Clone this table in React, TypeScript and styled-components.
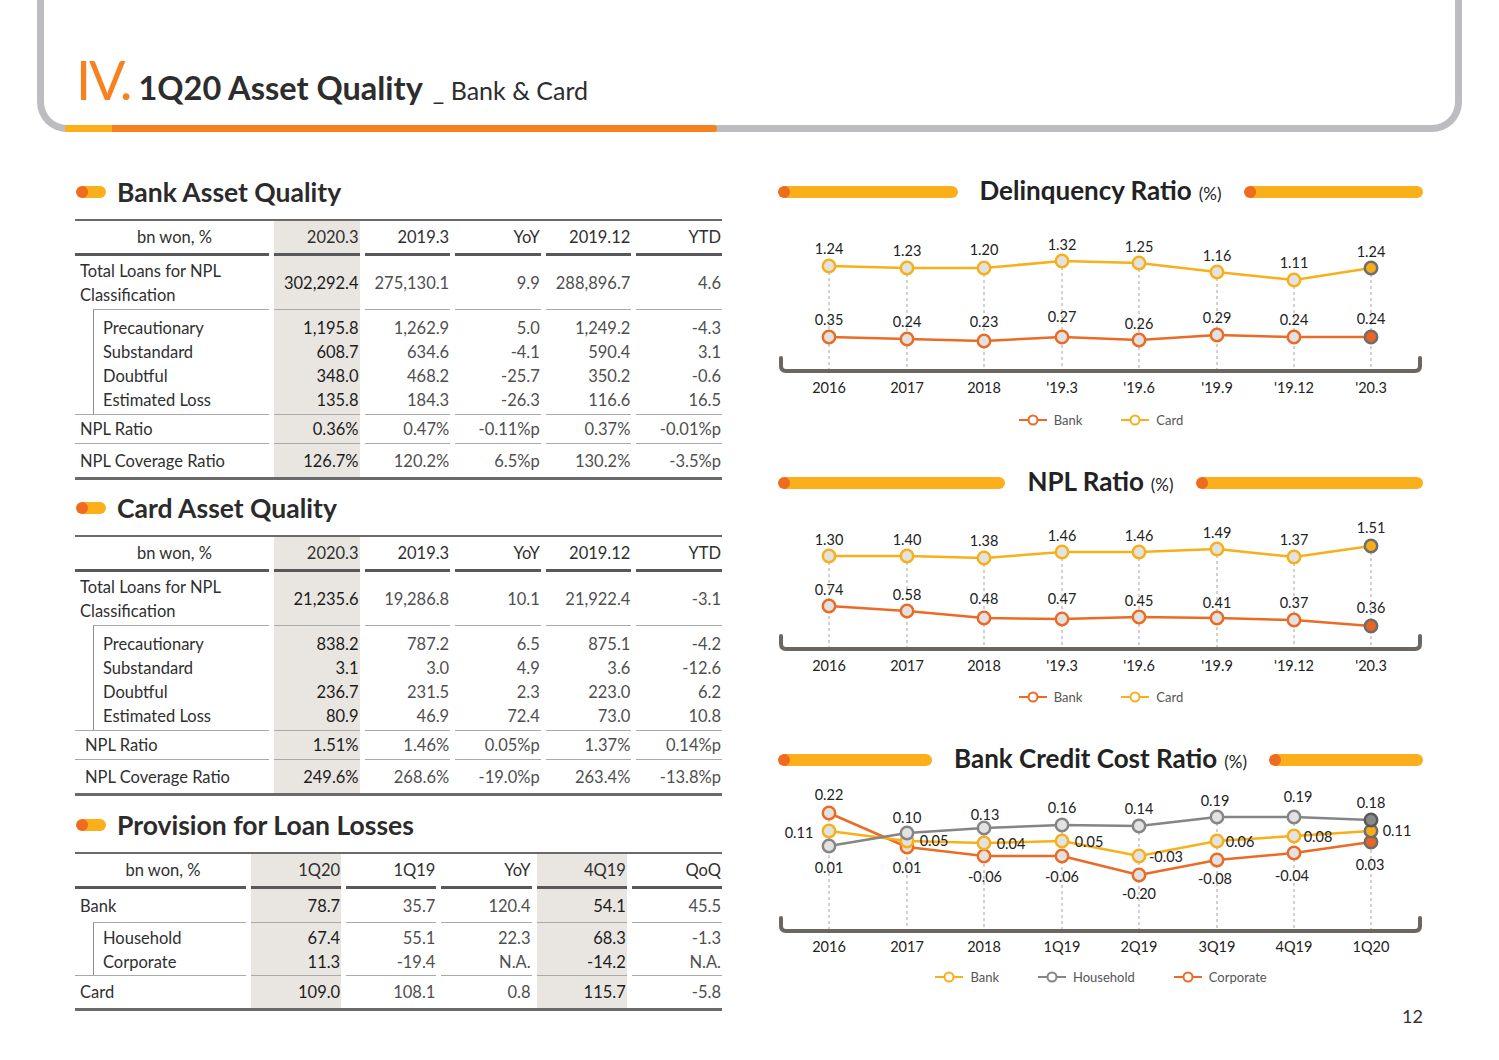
import React from 'react';
import styled, { createGlobalStyle } from 'styled-components';

const GlobalStyle = createGlobalStyle`
  html, body { margin: 0; padding: 0; background: #ffffff; }
  body { font-family: Lato, "Open Sans", "Liberation Sans", sans-serif; color: #2b2b2b; }
  * { box-sizing: border-box; }
`;

const Page = styled.div`
  width: 1499px;
  height: 1060px;
  overflow: hidden;
  background: #ffffff;
`;

const HeaderFrame = styled.header`
  position: relative;
  margin: 0 37px;
  height: 132px;
  border: 7px solid #bdbdc1;
  border-top: none;
  border-radius: 0 0 30px 30px;
  padding: 54px 0 0 32px;
  &::after {
    content: '';
    position: absolute;
    left: 21px;
    bottom: -7px;
    width: 652px;
    height: 7px;
    border-radius: 0 4px 4px 0;
    background: linear-gradient(to right, #fbb019 0 47px, #f5821f 47px 100%);
  }
`;

const TitleRow = styled.div`
  display: flex;
  align-items: baseline;
`;

const Roman = styled.span`
  font-size: 54px;
  line-height: 52px;
  font-weight: 400;
  color: #f5821f;
  margin-right: 8px;
  letter-spacing: -2px;
`;

const MainTitle = styled.h1`
  margin: 0;
  font-size: 32.5px;
  line-height: 1;
  font-weight: 700;
  color: #2d2d2d;
`;

const SubTitle = styled.span`
  font-size: 25px;
  font-weight: 400;
  margin-left: 10px;
  color: #2d2d2d;
`;

const Body = styled.main`
  display: flex;
  gap: 56px;
  padding: 47px 0 0 75px;
`;

const LeftCol = styled.section`
  width: 647px;
  display: flex;
  flex-direction: column;
`;

const RightCol = styled.section`
  width: 645px;
  display: flex;
  flex-direction: column;
`;

const SectionHeading = styled.h2<{ $mt: number }>`
  margin: ${p => p.$mt}px 0 14px;
  height: 26px;
  display: flex;
  align-items: center;
  gap: 11px;
  font-size: 26.5px;
  line-height: 26px;
  font-weight: 700;
  color: #2b2b2b;
`;

const Pill = styled.span`
  flex: none;
  width: 30px;
  height: 12px;
  margin-left: 1px;
  border-radius: 6px;
  background: radial-gradient(circle at 6px 50%, #f06b22 5.5px, transparent 6.5px), #fbb01b;
`;

const Table = styled.div`
  border-top: 2px solid #6a6a6a;
  border-bottom: 3px solid #6a6a6a;
  font-size: 16.5px;
`;

const Row = styled.div<{ $cols: string }>`
  display: grid;
  grid-template-columns: ${p => p.$cols};
  column-gap: 5px;
`;

const Cell = styled.div<{ $shade?: boolean; $label?: boolean; $indent?: number }>`
  display: flex;
  align-items: center;
  justify-content: ${p => (p.$label ? 'flex-start' : 'flex-end')};
  padding: ${p => (p.$label ? `0 0 0 ${p.$indent ?? 5}px` : '0 1px 0 0')};
  background: ${p => (p.$shade ? '#e9e6e1' : 'transparent')};
  color: ${p => (p.$label ? '#2f2f2f' : p.$shade ? '#1c1c1c' : '#4f4f4f')};
  line-height: 24px;
  white-space: nowrap;
`;

const HeadCell = styled(Cell)<{ $center?: boolean }>`
  height: 35px;
  border-bottom: 3px solid #58585a;
  justify-content: ${p => (p.$center ? 'center' : 'flex-end')};
  color: #2f2f2f;
`;

const LineCell = styled(Cell)<{ $h: number; $rule?: boolean }>`
  height: ${p => p.$h}px;
  border-top: ${p => (p.$rule ? '1px solid #a9a9a9' : 'none')};
`;

const GroupCell = styled(Cell)<{ $padTop: number; $padBottom: number }>`
  flex-direction: column;
  align-items: ${p => (p.$label ? 'flex-start' : 'flex-end')};
  justify-content: flex-start;
  padding-top: ${p => p.$padTop}px;
  padding-bottom: ${p => p.$padBottom}px;
  border-top: 1px solid #a9a9a9;
`;

const GroupLabelCell = styled(GroupCell)`
  margin-left: 18px;
  padding-left: 9px;
  border-left: 1px solid #8e8e8e;
`;

const CellText = styled.span`
  display: block;
  line-height: 24px;
`;

type LineRow = { kind: 'line'; label: React.ReactNode; values: string[]; h: number; indent?: number; rule?: boolean };
type GroupRow = { kind: 'group'; labels: string[]; values: string[][]; padTop: number; padBottom: number };
interface TableSpec {
  cols: string;
  shaded: number[];
  head: string[];
  rows: (LineRow | GroupRow)[];
}

const bankTable: TableSpec = {
  cols: '194px repeat(5, 1fr)',
  shaded: [0],
  head: ['2020.3', '2019.3', 'YoY', '2019.12', 'YTD'],
  rows: [
    { kind: 'line', label: <>Total Loans for NPL<br />Classification</>, values: ['302,292.4', '275,130.1', '9.9', '288,896.7', '4.6'], h: 53 },
    {
      kind: 'group',
      labels: ['Precautionary', 'Substandard', 'Doubtful', 'Estimated Loss'],
      values: [
        ['1,195.8', '608.7', '348.0', '135.8'],
        ['1,262.9', '634.6', '468.2', '184.3'],
        ['5.0', '-4.1', '-25.7', '-26.3'],
        ['1,249.2', '590.4', '350.2', '116.6'],
        ['-4.3', '3.1', '-0.6', '16.5'],
      ],
      padTop: 6,
      padBottom: 2,
    },
    { kind: 'line', label: 'NPL Ratio', values: ['0.36%', '0.47%', '-0.11%p', '0.37%', '-0.01%p'], h: 29, rule: true },
    { kind: 'line', label: 'NPL Coverage Ratio', values: ['126.7%', '120.2%', '6.5%p', '130.2%', '-3.5%p'], h: 34, rule: true },
  ],
};

const cardTable: TableSpec = {
  cols: '194px repeat(5, 1fr)',
  shaded: [0],
  head: ['2020.3', '2019.3', 'YoY', '2019.12', 'YTD'],
  rows: [
    { kind: 'line', label: <>Total Loans for NPL<br />Classification</>, values: ['21,235.6', '19,286.8', '10.1', '21,922.4', '-3.1'], h: 53 },
    {
      kind: 'group',
      labels: ['Precautionary', 'Substandard', 'Doubtful', 'Estimated Loss'],
      values: [
        ['838.2', '3.1', '236.7', '80.9'],
        ['787.2', '3.0', '231.5', '46.9'],
        ['6.5', '4.9', '2.3', '72.4'],
        ['875.1', '3.6', '223.0', '73.0'],
        ['-4.2', '-12.6', '6.2', '10.8'],
      ],
      padTop: 6,
      padBottom: 2,
    },
    { kind: 'line', label: 'NPL Ratio', values: ['1.51%', '1.46%', '0.05%p', '1.37%', '0.14%p'], h: 29, rule: true, indent: 10 },
    { kind: 'line', label: 'NPL Coverage Ratio', values: ['249.6%', '268.6%', '-19.0%p', '263.4%', '-13.8%p'], h: 34, rule: true, indent: 10 },
  ],
};

const provisionTable: TableSpec = {
  cols: '171px repeat(5, 1fr)',
  shaded: [0, 3],
  head: ['1Q20', '1Q19', 'YoY', '4Q19', 'QoQ'],
  rows: [
    { kind: 'line', label: 'Bank', values: ['78.7', '35.7', '120.4', '54.1', '45.5'], h: 33 },
    {
      kind: 'group',
      labels: ['Household', 'Corporate'],
      values: [
        ['67.4', '11.3'],
        ['55.1', '-19.4'],
        ['22.3', 'N.A.'],
        ['68.3', '-14.2'],
        ['-1.3', 'N.A.'],
      ],
      padTop: 3,
      padBottom: 1,
    },
    { kind: 'line', label: 'Card', values: ['109.0', '108.1', '0.8', '115.7', '-5.8'], h: 33, rule: true },
  ],
};

function DataTable({ spec }: { spec: TableSpec }) {
  const shade = (i: number) => spec.shaded.includes(i);
  return (
    <Table>
      <Row $cols={spec.cols}>
        <HeadCell $label $center>
          <CellText>bn won, %</CellText>
        </HeadCell>
        {spec.head.map((h, i) => (
          <HeadCell key={h} $shade={shade(i)}>
            <CellText>{h}</CellText>
          </HeadCell>
        ))}
      </Row>
      {spec.rows.map((r, ri) =>
        r.kind === 'line' ? (
          <Row key={ri} $cols={spec.cols}>
            <LineCell $label $h={r.h} $rule={r.rule} $indent={r.indent}>
              <CellText>{r.label}</CellText>
            </LineCell>
            {r.values.map((v, i) => (
              <LineCell key={i} $h={r.h} $rule={r.rule} $shade={shade(i)}>
                <CellText>{v}</CellText>
              </LineCell>
            ))}
          </Row>
        ) : (
          <Row key={ri} $cols={spec.cols}>
            <GroupLabelCell $label $padTop={r.padTop} $padBottom={r.padBottom}>
              {r.labels.map(l => (
                <CellText key={l}>{l}</CellText>
              ))}
            </GroupLabelCell>
            {r.values.map((col, i) => (
              <GroupCell key={i} $shade={shade(i)} $padTop={r.padTop} $padBottom={r.padBottom}>
                {col.map((v, j) => (
                  <CellText key={j}>{v}</CellText>
                ))}
              </GroupCell>
            ))}
          </Row>
        )
      )}
    </Table>
  );
}

/* ---------------- Charts ---------------- */

const ChartBlock = styled.div<{ $mt: number }>`
  margin-top: ${p => p.$mt}px;
  display: flex;
  flex-direction: column;
`;

const ChartTitleRow = styled.div`
  height: 26px;
  display: flex;
  align-items: center;
  gap: 22px;
`;

const TitleBar = styled.span`
  flex: 1;
  height: 12px;
  border-radius: 6px;
  background: radial-gradient(circle at 6px 50%, #f06b22 5.5px, transparent 6.5px), #fbb01b;
`;

const ChartTitle = styled.h3`
  margin: 0;
  font-size: 26px;
  line-height: 26px;
  font-weight: 700;
  color: #222222;
  white-space: nowrap;
`;

const Unit = styled.span`
  font-size: 17px;
  font-weight: 400;
  margin-left: 7px;
`;

const ChartSvg = styled.svg`
  display: block;
  overflow: visible;
  font-family: Lato, "Open Sans", sans-serif;
`;

const Legend = styled.div`
  margin-top: 10px;
  height: 18px;
  display: flex;
  justify-content: center;
  align-items: center;
  gap: 38px;
`;

const LegendItem = styled.span`
  display: flex;
  align-items: center;
  gap: 6px;
  font-size: 13px;
  color: #555555;
`;

const PageNumber = styled.div`
  margin-top: 21px;
  text-align: right;
  font-size: 18px;
  color: #333333;
  line-height: 18px;
`;

const XS = [51, 129, 206, 284, 361, 439, 516, 593];

const YELLOW = '#f7b019';
const ORANGE = '#eb6b26';
const GRAY = '#858585';

interface SeriesSpec {
  color: string;
  lastFill: string;
  lastStroke: string;
  ys: number[];
  labels: [number, number, string][];
}

interface ChartSpec {
  title: string;
  mt: number;
  height: number;
  baseY: number;
  labelY: number;
  xLabels: string[];
  series: SeriesSpec[];
  legend: { name: string; color: string }[];
}

const mkLabels = (ys: number[], texts: string[]): [number, number, string][] =>
  texts.map((t, i) => [XS[i], ys[i], t]);

const periodLabels = ['2016', '2017', '2018', "'19.3", "'19.6", "'19.9", "'19.12", "'20.3"];

const charts: ChartSpec[] = [
  {
    title: 'Delinquency Ratio',
    mt: 0,
    height: 196,
    baseY: 166,
    labelY: 182,
    xLabels: periodLabels,
    series: [
      {
        color: YELLOW,
        lastFill: '#f5ad1a',
        lastStroke: '#6d6d6d',
        ys: [61, 63, 63, 56, 58, 67, 75, 63],
        labels: mkLabels([43, 45, 44, 39, 41, 50, 57, 46], ['1.24', '1.23', '1.20', '1.32', '1.25', '1.16', '1.11', '1.24']),
      },
      {
        color: ORANGE,
        lastFill: '#ea6424',
        lastStroke: '#6d6d6d',
        ys: [132, 134, 136, 132, 135, 130, 132, 132],
        labels: mkLabels([114, 116, 116, 111, 118, 112, 114, 113], ['0.35', '0.24', '0.23', '0.27', '0.26', '0.29', '0.24', '0.24']),
      },
    ],
    legend: [
      { name: 'Bank', color: ORANGE },
      { name: 'Card', color: YELLOW },
    ],
  },
  {
    title: 'NPL Ratio',
    mt: 41,
    height: 182,
    baseY: 153,
    labelY: 169,
    xLabels: periodLabels,
    series: [
      {
        color: YELLOW,
        lastFill: '#f5ad1a',
        lastStroke: '#6d6d6d',
        ys: [60, 60, 62, 56, 56, 53, 61, 50],
        labels: mkLabels([43, 43, 44, 39, 39, 36, 43, 31], ['1.30', '1.40', '1.38', '1.46', '1.46', '1.49', '1.37', '1.51']),
      },
      {
        color: ORANGE,
        lastFill: '#ea6424',
        lastStroke: '#6d6d6d',
        ys: [110, 115, 122, 123, 121, 122, 124, 130],
        labels: mkLabels([93, 98, 102, 102, 104, 106, 106, 111], ['0.74', '0.58', '0.48', '0.47', '0.45', '0.41', '0.37', '0.36']),
      },
    ],
    legend: [
      { name: 'Bank', color: ORANGE },
      { name: 'Card', color: YELLOW },
    ],
  },
  {
    title: 'Bank Credit Cost Ratio',
    mt: 41,
    height: 185,
    baseY: 158,
    labelY: 173,
    xLabels: ['2016', '2017', '2018', '1Q19', '2Q19', '3Q19', '4Q19', '1Q20'],
    series: [
      {
        color: ORANGE,
        lastFill: '#ea6424',
        lastStroke: '#6d6d6d',
        ys: [40, 74, 83, 83, 102, 87, 80, 69],
        labels: [
          [51, 21, '0.22'], [129, 94, '0.01'], [207, 103, '-0.06'], [284, 103, '-0.06'],
          [361, 120, '-0.20'], [437, 105, '-0.08'], [514, 102, '-0.04'], [592, 91, '0.03'],
        ],
      },
      {
        color: YELLOW,
        lastFill: '#f5ad1a',
        lastStroke: '#6d6d6d',
        ys: [58, 68, 70, 68, 83, 68, 63, 58],
        labels: [
          [21, 59, '0.11'], [156, 67, '0.05'], [233, 70, '0.04'], [311, 68, '0.05'],
          [388, 83, '-0.03'], [462, 68, '0.06'], [540, 63, '0.08'], [619, 57, '0.11'],
        ],
      },
      {
        color: GRAY,
        lastFill: '#8a8a8a',
        lastStroke: '#595959',
        ys: [73, 60, 55, 52, 53, 44, 44, 47],
        labels: [
          [51, 94, '0.01'], [129, 44, '0.10'], [207, 41, '0.13'], [284, 34, '0.16'],
          [361, 35, '0.14'], [437, 27, '0.19'], [520, 23, '0.19'], [593, 29, '0.18'],
        ],
      },
    ],
    legend: [
      { name: 'Bank', color: YELLOW },
      { name: 'Household', color: GRAY },
      { name: 'Corporate', color: ORANGE },
    ],
  },
];

function LegendIcon({ color }: { color: string }) {
  return (
    <svg width="30" height="12" viewBox="0 0 30 12">
      <line x1="1" y1="6" x2="29" y2="6" stroke={color} strokeWidth="2" />
      <circle cx="15" cy="6" r="4.5" fill="#ffffff" stroke={color} strokeWidth="2" />
    </svg>
  );
}

function LineChart({ spec }: { spec: ChartSpec }) {
  const b = spec.baseY;
  const tops = XS.map((_, i) => Math.min(...spec.series.map(s => s.ys[i])));
  return (
    <ChartBlock $mt={spec.mt}>
      <ChartTitleRow>
        <TitleBar />
        <ChartTitle>
          {spec.title}
          <Unit>(%)</Unit>
        </ChartTitle>
        <TitleBar />
      </ChartTitleRow>
      <ChartSvg width={645} height={spec.height} viewBox={`0 0 645 ${spec.height}`}>
        {XS.map((x, i) => (
          <line key={`d${i}`} x1={x} y1={tops[i]} x2={x} y2={b - 2} stroke="#a3a3a3" strokeWidth="1" strokeDasharray="3 3" />
        ))}
        <path
          d={`M3 ${b - 13} V${b - 5} Q3 ${b} 8 ${b} H637 Q642 ${b} 642 ${b - 5} V${b - 13}`}
          fill="none"
          stroke="#6c6661"
          strokeWidth="4"
          strokeLinecap="round"
        />
        {spec.series.map((s, si) => (
          <polyline
            key={`l${si}`}
            points={s.ys.map((y, i) => `${XS[i]},${y}`).join(' ')}
            fill="none"
            stroke={s.color}
            strokeWidth="2.5"
            strokeLinejoin="round"
          />
        ))}
        {spec.series.map((s, si) =>
          s.ys.map((y, i) => {
            const last = i === XS.length - 1;
            return (
              <circle
                key={`c${si}-${i}`}
                cx={XS[i]}
                cy={y}
                r="6.2"
                fill={last ? s.lastFill : '#e2e2e2'}
                stroke={last ? s.lastStroke : s.color}
                strokeWidth="2.5"
              />
            );
          })
        )}
        {spec.series.map((s, si) =>
          s.labels.map(([x, y, t], i) => (
            <text key={`t${si}-${i}`} x={x} y={y} fontSize="14.5" fill="#222222" textAnchor="middle" dominantBaseline="central">
              {t}
            </text>
          ))
        )}
        {spec.xLabels.map((t, i) => (
          <text key={`x${i}`} x={XS[i]} y={spec.labelY} fontSize="14.5" fill="#222222" textAnchor="middle" dominantBaseline="central">
            {t}
          </text>
        ))}
      </ChartSvg>
      <Legend>
        {spec.legend.map(l => (
          <LegendItem key={l.name}>
            <LegendIcon color={l.color} />
            {l.name}
          </LegendItem>
        ))}
      </Legend>
    </ChartBlock>
  );
}

export default function App() {
  return (
    <Page>
      <GlobalStyle />
      <HeaderFrame>
        <TitleRow>
          <Roman>IV.</Roman>
          <MainTitle>1Q20 Asset Quality</MainTitle>
          <SubTitle>_ Bank &amp; Card</SubTitle>
        </TitleRow>
      </HeaderFrame>
      <Body>
        <LeftCol>
          <SectionHeading $mt={0}>
            <Pill />
            Bank Asset Quality
          </SectionHeading>
          <DataTable spec={bankTable} />
          <SectionHeading $mt={15}>
            <Pill />
            Card Asset Quality
          </SectionHeading>
          <DataTable spec={cardTable} />
          <SectionHeading $mt={16}>
            <Pill />
            Provision for Loan Losses
          </SectionHeading>
          <DataTable spec={provisionTable} />
        </LeftCol>
        <RightCol>
          {charts.map(c => (
            <LineChart key={c.title} spec={c} />
          ))}
          <PageNumber>12</PageNumber>
        </RightCol>
      </Body>
    </Page>
  );
}
